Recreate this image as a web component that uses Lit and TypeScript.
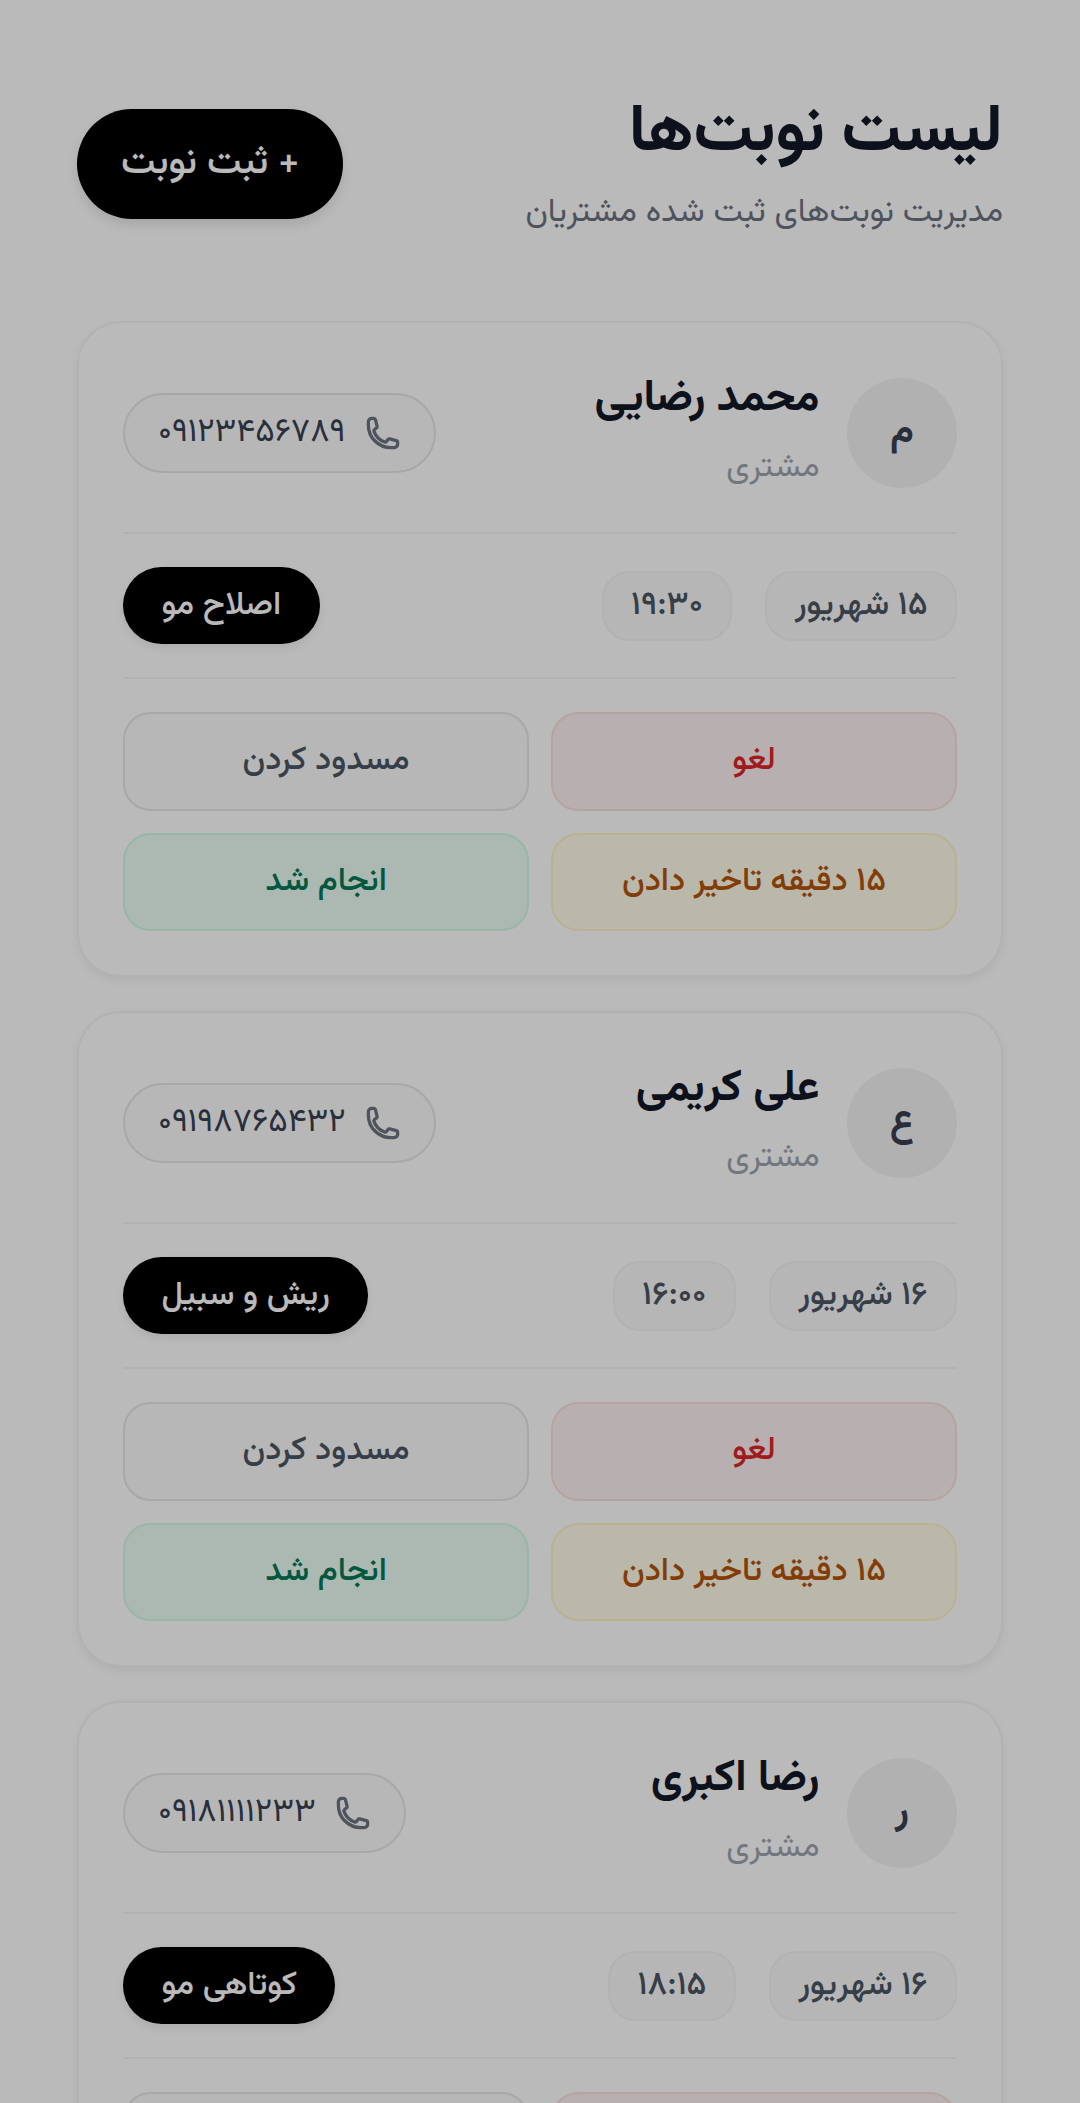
import { LitElement, html, css } from "lit";
import { customElement } from "lit/decorators.js";

const phoneIcon = html`<svg class="ph-ic" viewBox="0 0 24 24" fill="none" stroke="currentColor" stroke-width="2.2" stroke-linecap="round" stroke-linejoin="round"><path d="M2.25 6.75c0 8.284 6.716 15 15 15h2.25a2.25 2.25 0 002.25-2.25v-1.372c0-.516-.351-.966-.852-1.091l-4.423-1.106c-.44-.11-.902.055-1.173.417l-.97 1.293c-.282.376-.769.542-1.21.38a12.035 12.035 0 01-7.143-7.143c-.162-.441.004-.928.38-1.21l1.293-.97c.363-.271.527-.734.417-1.173L6.963 3.102a1.125 1.125 0 00-1.091-.852H4.5A2.25 2.25 0 002.25 4.5v2.25z"/></svg>`;

const items = [
  { l: "م", n: "محمد رضایی", p: "۰۹۱۲۳۴۵۶۷۸۹", d: "۱۵ شهریور", t: "۱۹:۳۰", s: "اصلاح مو" },
  { l: "ع", n: "علی کریمی", p: "۰۹۱۹۸۷۶۵۴۳۲", d: "۱۶ شهریور", t: "۱۶:۰۰", s: "ریش و سبیل" },
  { l: "ر", n: "رضا اکبری", p: "۰۹۱۸۱۱۱۱۲۳۳", d: "۱۶ شهریور", t: "۱۸:۱۵", s: "کوتاهی مو" },
];

@customElement("app-root")
export class AppRoot extends LitElement {
  static styles = css`
    :host { display: block; height: 2103px; overflow: hidden; position: relative; background: #fff;
      font-family: "Vazirmatn", "Noto Sans", sans-serif; direction: rtl; }
    .page { padding: 77px 77px 0; display: flex; flex-direction: column; gap: 34px; }
    .head { display: flex; justify-content: space-between; align-items: flex-start; height: 210px; flex: none; }
    h1 { margin: 7px 0 0; font-size: 66px; line-height: 99px; font-weight: 700; color: #111827; }
    .sub { font-size: 33px; line-height: 50px; color: #6b7280; margin-top: 5px; }
    .add { height: 110px; margin-top: 32px; padding: 0 44px; border-radius: 55px; border: 0; background: #000; color: #fff; font: inherit; font-size: 38.5px; font-weight: 500; box-shadow: 0 6px 12px rgba(0,0,0,.1); }
    .card { border: 2px solid #f3f4f6; border-radius: 44px; padding: 44px; background: #fff; box-shadow: 0 4px 10px rgba(0,0,0,.06); height: 656px; box-sizing: border-box; flex: none; }
    .top { display: flex; justify-content: space-between; align-items: center; height: 132px; padding-bottom: 33px; border-bottom: 2px solid #f3f4f6; }
    .who { display: flex; align-items: center; gap: 27.5px; }
    .av { width: 110px; height: 110px; border-radius: 50%; background: #f3f3f4; display: flex; align-items: center; justify-content: center; font-size: 38.5px; font-weight: 700; color: #374151; }
    .name { font-size: 44px; font-weight: 700; line-height: 66px; color: #111827; margin-bottom: 11px; }
    .role { font-size: 33px; line-height: 49.5px; color: #9ca3af; margin-bottom: 5.5px; }
    .phone { display: flex; align-items: center; gap: 19px; height: 80px; box-sizing: border-box; padding: 0 33px; border: 2px solid #e5e6e8; background: #fbfbfb; border-radius: 40px; color: #374151; font-size: 33px; }
    .ph-ic { width: 36px; height: 36px; color: #6b7280; flex: none; }
    .mid { display: flex; justify-content: space-between; align-items: center; padding: 33px 0; border-bottom: 2px solid #f3f4f6; }
    .chips { display: flex; gap: 33px; }
    .chip { height: 70px; box-sizing: border-box; padding: 0 27.5px; border: 2px solid #f4f4f5; background: #fafafa; border-radius: 27.5px; font-size: 33px; font-weight: 500; color: #4b5563; display: flex; align-items: center; }
    .svc { height: 77px; padding: 0 38.5px; display: flex; align-items: center; border-radius: 38.5px; background: #000; color: #fff; font-size: 33px; font-weight: 500; box-shadow: 0 4px 8px rgba(0,0,0,.08); }
    .btns { display: grid; grid-template-columns: 1fr 1fr; gap: 22px; padding-top: 33px; }
    .btn { height: 98.5px; box-sizing: border-box; border-radius: 27.5px; border: 2px solid; display: flex; align-items: center; justify-content: center; font-size: 33px; font-weight: 500; }
    .cancel { background: #fdf1f1; border-color: #fbdfdf; color: #dc2626; }
    .block { background: #fbfbfb; border-color: #e5e6e8; color: #4b5563; }
    .delay { background: #fffbeb; border-color: #fef3c7; color: #b45309; }
    .done { background: #ecfdf5; border-color: #d1fae5; color: #047857; }
    .dim { position: absolute; inset: 0; background: rgba(0,0,0,.27); }
  `;
  render() {
    return html`<div class="page">
      <div class="head">
        <div><h1>لیست نوبت‌ها</h1><div class="sub">مدیریت نوبت‌های ثبت شده مشتریان</div></div>
        <button class="add">+ ثبت نوبت</button>
      </div>
      ${items.map((i) => html`<div class="card">
        <div class="top">
          <div class="who"><div class="av">${i.l}</div><div><div class="name">${i.n}</div><div class="role">مشتری</div></div></div>
          <div class="phone">${phoneIcon}<span>${i.p}</span></div>
        </div>
        <div class="mid">
          <div class="chips"><div class="chip">${i.d}</div><div class="chip">${i.t}</div></div>
          <div class="svc">${i.s}</div>
        </div>
        <div class="btns">
          <div class="btn cancel">لغو</div><div class="btn block">مسدود کردن</div>
          <div class="btn delay">۱۵ دقیقه تاخیر دادن</div><div class="btn done">انجام شد</div>
        </div>
      </div>`)}
    </div><div class="dim"></div>`;
  }
}
